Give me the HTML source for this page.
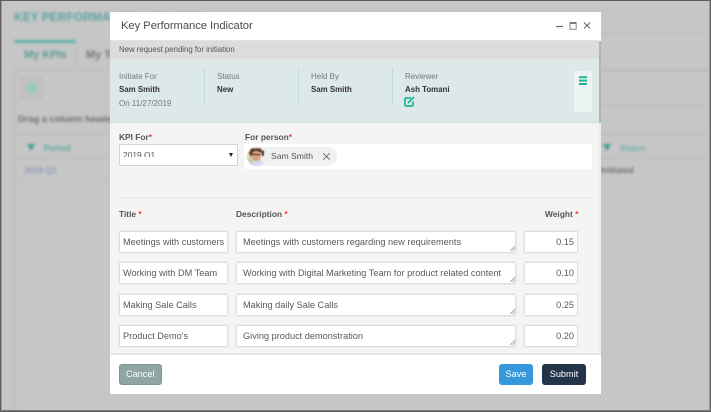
<!DOCTYPE html>
<html><head><meta charset="utf-8">
<style>
html,body{margin:0;padding:0;width:711px;height:412px;overflow:hidden;background:#c6c6c6}
*{box-sizing:border-box}
body{font-family:"Liberation Sans",sans-serif;color:#555;position:relative}
.a{position:absolute;white-space:nowrap}
#bg{position:absolute;left:0;top:0;width:711px;height:412px;filter:blur(1.2px);overflow:hidden}
#fg{position:absolute;left:0;top:0;width:711px;height:412px;filter:blur(.3px)}
.in{position:absolute;background:#fff;border:1px solid #dedede;border-radius:2px;height:22px;font-size:9.2px;line-height:19px;padding-left:3px;color:#5a5a5a;white-space:nowrap;box-shadow:0 0 0 .5px #e6e6e6}
.t{line-height:20px}
.d{padding-left:6px;line-height:20.5px}
.w{text-align:right;padding:0 3px 0 0;line-height:20px}
.lbl{font-size:8px;color:#777}
.b{font-size:7.9px;color:#333;font-weight:bold}
.h{font-size:8.4px;font-weight:bold;color:#555}
.r{color:#f33}
.sep{position:absolute;width:1px;background:#c5dbd8;top:68px;height:37px}
.btn{position:absolute;top:364px;height:20.5px;border-radius:3px;color:#fff;font-size:9.2px;text-align:center;line-height:20.5px}
</style></head><body>
<div id="bg">
<div class="a" style="left:14px;top:10px;font-size:12px;font-weight:bold;color:#5aa59f">KEY PERFORMANCE INDICATOR</div>
<div class="a" style="left:14px;top:40px;width:62px;height:3px;background:#5fb4ae"></div>
<div class="a" style="left:24px;top:49px;font-size:11px;font-weight:bold;color:#5c9a95">My KPIs</div>
<div class="a" style="left:86px;top:49px;font-size:11px;font-weight:bold;color:#747474">My Team</div>
<div class="a" style="left:75px;top:43px;width:1px;height:26px;background:#bbb"></div>
<div class="a" style="left:14px;top:69px;width:697px;height:1px;background:#b8b8b8"></div>
<div class="a" style="left:14px;top:69px;width:1px;height:343px;background:#bbb"></div>
<div class="a" style="left:20px;top:77px;width:22px;height:22px;background:#c2c2c2;border:1px solid #b5b5b5;border-radius:3px"></div>
<div class="a" style="left:27px;top:83px;width:9px;height:10px;background:#9cc8c5"></div>
<div class="a" style="left:18px;top:114px;font-size:9.3px;font-weight:bold;color:#707070">Drag a column header</div>
<div class="a" style="left:14px;top:133px;width:697px;height:1px;background:#b8b8b8"></div>
<div class="a" style="left:14px;top:157px;width:697px;height:1px;background:#b8b8b8"></div>
<div class="a" style="left:14px;top:181px;width:697px;height:1px;background:#bcbcbc"></div>
<div class="a" style="left:27px;top:144px;width:0;height:0;border-left:4px solid transparent;border-right:4px solid transparent;border-top:7px solid #3d9e93"></div>
<div class="a" style="left:44px;top:143px;font-size:8.5px;color:#5ca89e;font-weight:bold">Period</div>
<div class="a" style="left:24px;top:165px;font-size:8.5px;color:#7488b0">2019 Q1</div>
<div class="a" style="left:603px;top:144px;width:0;height:0;border-left:4px solid transparent;border-right:4px solid transparent;border-top:7px solid #3d9e93"></div>
<div class="a" style="left:620px;top:143px;font-size:8.5px;color:#72b0a8;font-weight:bold">Status</div>
<div class="a" style="left:601px;top:165px;font-size:8.5px;color:#6e6e6e;font-weight:bold">Initiated</div>
<div class="a" style="left:601px;top:32px;width:110px;height:1px;background:#bbb"></div>
<div class="a" style="left:601px;top:70px;width:110px;height:1px;background:#b8b8b8"></div>
<div class="a" style="left:601px;top:105px;width:110px;height:1px;background:#bbb"></div>
</div>

<!-- outer frame -->
<div class="a" style="left:0;top:0;width:711px;height:412px;border:solid #5c5c5c;border-width:1px 1px 1px 1px;box-shadow:inset 1px 0 0 #9a9a9a,inset -1px 0 0 #9a9a9a,inset 0 -1px 0 #777"></div>

<div id="fg">
<!-- modal -->
<div class="a" style="left:110px;top:12px;width:491px;height:382px;background:#fff"></div>
<div class="a" style="left:121px;top:20px;font-size:11.2px;color:#4a4a4a;letter-spacing:-.03px">Key Performance Indicator</div>
<svg class="a" style="left:554px;top:20px" width="40" height="13" viewBox="0 0 40 13"><path d="M2 6.5H9" stroke="#666" stroke-width="1.2" fill="none"/><rect x="16" y="2.7" width="6.2" height="6.6" fill="none" stroke="#888" stroke-width="1"/><path d="M16 3H22" stroke="#666" stroke-width="1.6"/><path d="M30 2.5L36 8.5M36 2.5L30 8.5" stroke="#666" stroke-width="1" fill="none"/></svg>

<div class="a" style="left:110px;top:40px;width:489px;height:1px;background:#e2e2e2"></div>
<div class="a" style="left:110px;top:41px;width:489px;height:18px;background:#dcdcdc"></div>
<div class="a" style="left:119px;top:45px;font-size:7.8px;color:#555">New request pending for initiation</div>
<div class="a" style="left:110px;top:59px;width:489px;height:63px;background:#dce9e8"></div>
<div class="a" style="left:110px;top:122px;width:489px;height:1px;background:#c9dfdb"></div>
<div class="a" style="left:599px;top:41px;width:2px;height:82px;background:#b4b4b4"></div>

<div class="a lbl" style="left:119px;top:72px">Initiate For</div>
<div class="a b" style="left:119px;top:85px">Sam Smith</div>
<div class="a lbl" style="left:119px;top:99px">On 11/27/2019</div>
<div class="sep" style="left:204px"></div>
<div class="a lbl" style="left:217px;top:72px">Status</div>
<div class="a b" style="left:217px;top:85px">New</div>
<div class="sep" style="left:298px"></div>
<div class="a lbl" style="left:311px;top:72px">Held By</div>
<div class="a b" style="left:311px;top:85px">Sam Smith</div>
<div class="sep" style="left:392px"></div>
<div class="a lbl" style="left:405px;top:72px">Reviewer</div>
<div class="a b" style="left:405px;top:85px">Ash Tomani</div>
<svg class="a" style="left:404px;top:96px" width="12" height="11" viewBox="0 0 12 11"><path d="M7 2H2.2Q1 2 1 3.2V8.8Q1 10 2.2 10H7.8Q9 10 9 8.8V5.5" fill="none" stroke="#1fb596" stroke-width="1.7"/><path d="M4 7L10 1" stroke="#1fb596" stroke-width="1.8"/></svg>
<div class="a" style="left:574px;top:71px;width:18px;height:41px;background:#ecf4f3;border-radius:2px"></div>
<svg class="a" style="left:579px;top:76px" width="8" height="10" viewBox="0 0 8 10"><path d="M0 1.2H8M0 4.6H8M0 8H8" stroke="#1fb596" stroke-width="2"/></svg>

<!-- body -->
<div class="a" style="left:110px;top:123px;width:489px;height:231px;background:#f4f4f4"></div>
<div class="a" style="left:599px;top:123px;width:2px;height:232px;background:#ececec"></div>
<div class="a h" style="left:119px;top:132px">KPI For<span class="r">*</span></div>
<div class="a h" style="left:245px;top:132px">For person<span class="r">*</span></div>
<div class="a" style="left:119px;top:144px;width:119px;height:22px;background:#fff;border:1px solid #d4d4d4;overflow:hidden"></div>
<div class="a" style="left:123px;top:149.5px;font-size:8.4px;color:#555;height:7.5px;line-height:11px;overflow:hidden">2019 Q1</div>
<div class="a" style="left:229px;top:153px;width:0;height:0;border-left:2.5px solid transparent;border-right:2.5px solid transparent;border-top:4px solid #222"></div>
<div class="a" style="left:244px;top:144px;width:348px;height:25px;background:#fff"></div>
<div class="a" style="left:247px;top:147px;width:90px;height:19px;background:#f1f1f1;border-radius:10px"></div>
<svg class="a" style="left:247px;top:147px;filter:blur(.4px)" width="19" height="19" viewBox="0 0 19 19"><defs><clipPath id="c"><circle cx="9.5" cy="9.5" r="9.5"/></clipPath></defs><g clip-path="url(#c)"><rect width="19" height="19" fill="#e2d3b0"/><rect x="0" y="11" width="7" height="8" fill="#c4d2ae"/><rect x="14" y="0" width="5" height="19" fill="#f1efec"/><path d="M2 6L4 1.5H14L15.5 7L13 5H6L4 10Z" fill="#5e3c2a"/><ellipse cx="9.3" cy="9" rx="4.4" ry="5.2" fill="#d7a080"/><path d="M5 7.5H14" stroke="#4a2a20" stroke-width="1.1"/><path d="M5 15Q10 12.5 17 15V19H5Z" fill="#d3dcee"/><rect x="15" y="3.5" width="1.8" height="5.5" fill="#2a2a2a"/></g></svg>
<div class="a" style="left:271px;top:151px;font-size:8.6px;color:#555">Sam Smith</div>
<svg class="a" style="left:322px;top:151.5px" width="9" height="9" viewBox="0 0 9 9"><path d="M1.3 1.3L7.7 7.7M7.7 1.3L1.3 7.7" stroke="#666" stroke-width=".9"/></svg>
<div class="a" style="left:119px;top:197px;width:473px;border-top:1px dotted #d8d8d8"></div>

<div class="a h" style="left:119px;top:209px">Title <span class="r">*</span></div>
<div class="a h" style="left:236px;top:209px">Description <span class="r">*</span></div>
<div class="a h" style="left:545px;top:209px">Weight <span class="r">*</span></div>

<div class="in t" style="left:119px;top:231px;width:109px">Meetings with customers</div>
<div class="in d" style="left:236px;top:231px;width:280px">Meetings with customers regarding new requirements</div>
<div class="in w" style="left:524px;top:231px;width:54px">0.15</div>
<div class="in t" style="left:119px;top:262px;width:109px">Working with DM Team</div>
<div class="in d" style="left:236px;top:262px;width:280px">Working with Digital Marketing Team for product related content</div>
<div class="in w" style="left:524px;top:262px;width:54px">0.10</div>
<div class="in t" style="left:119px;top:293.5px;width:109px">Making Sale Calls</div>
<div class="in d" style="left:236px;top:293.5px;width:280px">Making daily Sale Calls</div>
<div class="in w" style="left:524px;top:293.5px;width:54px">0.25</div>
<div class="in t" style="left:119px;top:325px;width:109px">Product Demo's</div>
<div class="in d" style="left:236px;top:325px;width:280px">Giving product demonstration</div>
<div class="in w" style="left:524px;top:325px;width:54px">0.20</div>

<svg class="a" style="left:509px;top:245px" width="7" height="7"><path d="M1 6L6 1M3.5 6L6 3.5" stroke="#888" stroke-width=".7"/></svg>
<svg class="a" style="left:509px;top:276px" width="7" height="7"><path d="M1 6L6 1M3.5 6L6 3.5" stroke="#888" stroke-width=".7"/></svg>
<svg class="a" style="left:509px;top:308px" width="7" height="7"><path d="M1 6L6 1M3.5 6L6 3.5" stroke="#888" stroke-width=".7"/></svg>
<svg class="a" style="left:509px;top:339px" width="7" height="7"><path d="M1 6L6 1M3.5 6L6 3.5" stroke="#888" stroke-width=".7"/></svg>

<div class="a" style="left:110px;top:353px;width:491px;height:2px;background:#e6e6e6"></div>
<div class="btn" style="left:119px;width:42.5px;background:#8fa5a3;border:1px solid #7f9593;line-height:18.5px">Cancel</div>
<div class="btn" style="left:499px;width:34px;background:#3498db">Save</div>
<div class="btn" style="left:542px;width:44px;background:#233448">Submit</div>
</div>
</body></html>
